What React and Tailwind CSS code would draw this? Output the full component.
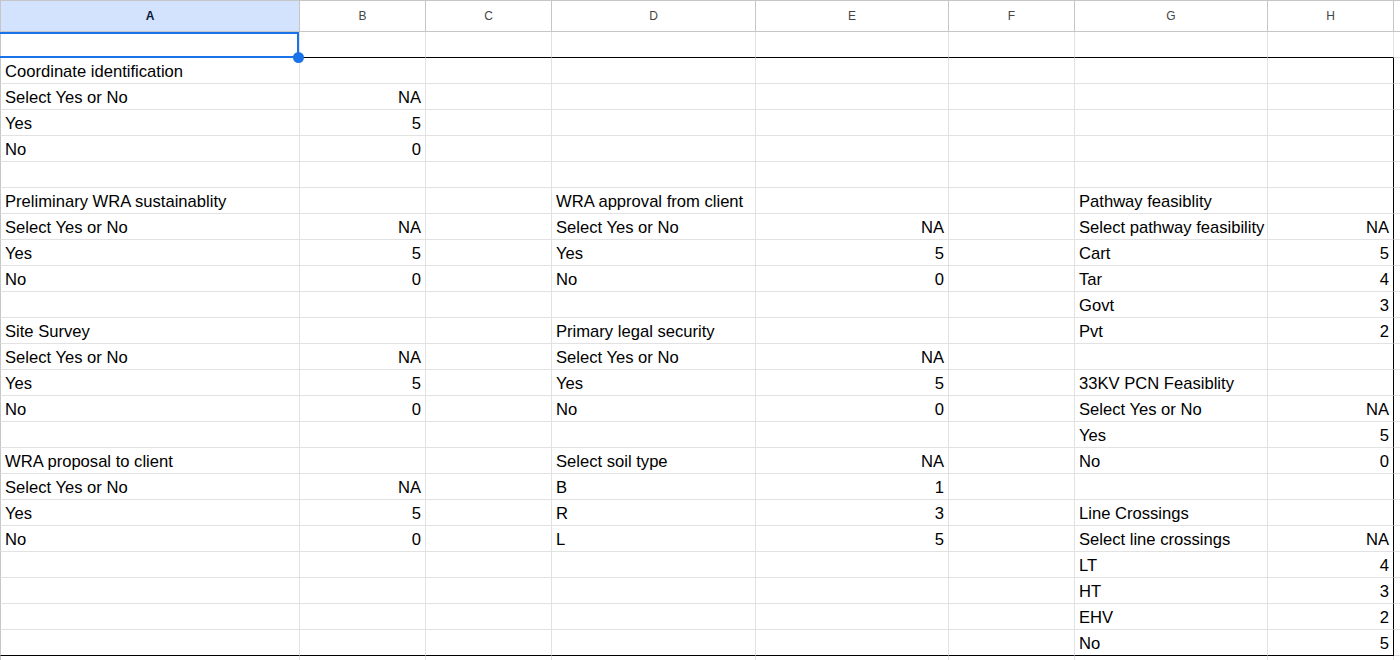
import React from "react";

const COLS = ["A", "B", "C", "D", "E", "F", "G", "H", ""];

const rows = [
  ["Coordinate identification", "", "", "", "", "", "", ""],
  ["Select Yes or No", "NA", "", "", "", "", "", ""],
  ["Yes", "5", "", "", "", "", "", ""],
  ["No", "0", "", "", "", "", "", ""],
  ["", "", "", "", "", "", "", ""],
  ["Preliminary WRA sustainablity", "", "", "WRA approval from client", "", "", "Pathway feasiblity", ""],
  ["Select Yes or No", "NA", "", "Select Yes or No", "NA", "", "Select pathway feasibility", "NA"],
  ["Yes", "5", "", "Yes", "5", "", "Cart", "5"],
  ["No", "0", "", "No", "0", "", "Tar", "4"],
  ["", "", "", "", "", "", "Govt", "3"],
  ["Site Survey", "", "", "Primary legal security", "", "", "Pvt", "2"],
  ["Select Yes or No", "NA", "", "Select Yes or No", "NA", "", "", ""],
  ["Yes", "5", "", "Yes", "5", "", "33KV PCN Feasiblity", ""],
  ["No", "0", "", "No", "0", "", "Select Yes or No", "NA"],
  ["", "", "", "", "", "", "Yes", "5"],
  ["WRA proposal to client", "", "", "Select soil type", "NA", "", "No", "0"],
  ["Select Yes or No", "NA", "", "B", "1", "", "", ""],
  ["Yes", "5", "", "R", "3", "", "Line Crossings", ""],
  ["No", "0", "", "L", "5", "", "Select line crossings", "NA"],
  ["", "", "", "", "", "", "LT", "4"],
  ["", "", "", "", "", "", "HT", "3"],
  ["", "", "", "", "", "", "EHV", "2"],
  ["", "", "", "", "", "", "No", "5"],
  ["", "", "", "", "", "", "", ""],
];

const numericCols = [1, 4, 7];

function Cell({ text, col, rowIdx }) {
  const isFirst = col === 0;
  const inRangeCol = col <= 7;
  const lastRow = rowIdx === 22;
  const blackBottom = inRangeCol && lastRow;
  const blackRight = col === 7 && rowIdx <= 22;
  const right = numericCols.includes(col);
  return (
    <div
      className={[
        "h-[26px] border-b border-r px-[4px] text-[16.6px] leading-[27px] text-black whitespace-nowrap overflow-hidden",
        isFirst ? "border-l border-l-[#c4c7c5] pl-[4px]" : "",
        blackBottom ? "border-b-black" : "border-b-[#e2e2e3]",
        blackRight ? "border-r-black" : "border-r-[#e2e2e3]",
        right ? "text-right" : "text-left",
      ].join(" ")}
    >
      {text}
    </div>
  );
}

export default function App() {
  return (
    <div
      className="relative h-[660px] w-[1400px] overflow-hidden bg-white"
      style={{ fontFamily: '"Liberation Sans", Arial, sans-serif' }}
    >
      <div className="grid grid-cols-[300px_126px_126px_204px_193px_126px_193px_126px_1fr]">
        {COLS.map((c, i) => (
          <div
            key={"h" + i}
            className={[
              "h-[32px] border-t border-b border-r border-[#c4c7c5] flex items-center justify-center text-[12px]",
              i === 0 ? "bg-[#d3e3fd] font-bold text-[#0b1a33] border-l" : "bg-white text-[#444746]",
            ].join(" ")}
          >
            {c}
          </div>
        ))}
        {Array.from({ length: 9 }).map((_, i) => (
          <div
            key={"r1" + i}
            className={[
              "h-[26px] border-r border-b",
              i === 0 ? "border-l border-l-[#c4c7c5]" : "",
              i <= 7 ? "border-b-black" : "border-b-[#e2e2e3]",
              "border-r-[#e2e2e3]",
            ].join(" ")}
          />
        ))}
        {rows.map((r, ri) =>
          [...r, ""].map((t, ci) => <Cell key={ri + "-" + ci} text={t} col={ci} rowIdx={ri} />)
        )}
      </div>
      <div className="absolute left-0 top-[32px] h-[26px] w-[299px] border-t-2 border-r-2 border-b-2 border-[#1a73e8]" />
      <div className="absolute left-[293px] top-[52px] h-[11px] w-[11px] rounded-full bg-[#1a73e8]" />
    </div>
  );
}
